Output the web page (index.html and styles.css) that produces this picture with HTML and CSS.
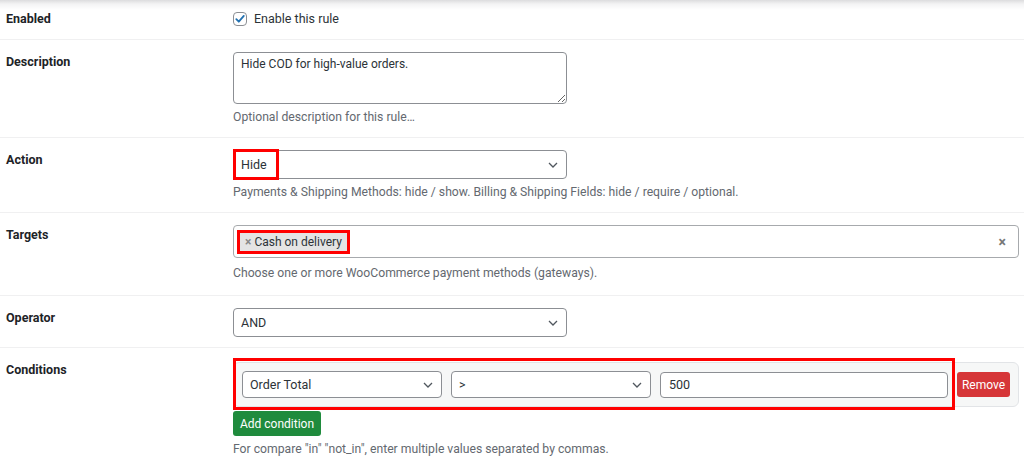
FILE: index.html
```html
<!DOCTYPE html>
<html lang="en">
<head>
<meta charset="utf-8">
<title>Rule</title>
<link rel="stylesheet" href="styles.css">
</head>
<body>
<div class="page">
  <div class="row row-first">
    <div class="label">Enabled</div>
    <div class="field">
      <label class="check">
        <span class="box"><svg width="12" height="12" viewBox="0 0 12 12"><path d="M2.3 6.2 L4.8 8.7 L9.8 2.9" fill="none" stroke="#2271b1" stroke-width="1.8" stroke-linecap="round" stroke-linejoin="round"/></svg></span>
        Enable this rule
      </label>
    </div>
  </div>

  <div class="row">
    <div class="label">Description</div>
    <div class="field">
      <textarea class="textarea" rows="3">Hide COD for high-value orders.</textarea>
      <p class="hint hint-tight">Optional description for this rule…</p>
    </div>
  </div>

  <div class="row">
    <div class="label">Action</div>
    <div class="field">
      <div class="wrap">
        <select class="select"><option>Hide</option></select>
        <span class="mark mark-hide"></span>
      </div>
      <p class="hint hint-tight">Payments &amp; Shipping Methods: hide / show. Billing &amp; Shipping Fields: hide / require / optional.</p>
    </div>
  </div>

  <div class="row row-targets">
    <div class="label">Targets</div>
    <div class="field field-wide">
      <div class="multi">
        <span class="tag"><span class="tag-x">×</span>Cash on delivery</span>
        <span class="clear">×</span>
      </div>
      <p class="hint hint-loose">Choose one or more WooCommerce payment methods (gateways).</p>
    </div>
  </div>

  <div class="row row-operator">
    <div class="label">Operator</div>
    <div class="field">
      <select class="select"><option>AND</option></select>
    </div>
  </div>

  <div class="row row-last">
    <div class="label">Conditions</div>
    <div class="field field-wide">
      <div class="cond">
        <select class="select select-sm"><option>Order Total</option></select>
        <select class="select select-sm"><option>&gt;</option></select>
        <input class="input" type="text" value="500">
        <button class="btn btn-remove" type="button">Remove</button>
        <span class="mark mark-cond"></span>
      </div>
      <button class="btn btn-add" type="button">Add condition</button>
      <p class="hint hint-tight">For compare "in" "not_in", enter multiple values separated by commas.</p>
    </div>
  </div>
</div>
</body>
</html>
```

FILE: styles.css
```css
* { box-sizing: border-box; }

html, body {
  margin: 0;
  padding: 0;
  background: #fff;
}

body {
  font-family: Roboto, "Liberation Sans", Arial, sans-serif;
  font-size: 12px;
  color: #2c3338;
}

.page {
  width: 1024px;
  height: 466px;
  overflow: hidden;
  background: linear-gradient(#dcdcde 0, #f3f3f4 4px, #fff 10px) no-repeat;
}

.row {
  display: grid;
  grid-template-columns: 233px 1fr;
  border-bottom: 1px solid #f0f0f1;
}

.label {
  padding: 13px 0 0 6px;
  font-size: 12.5px;
  font-weight: 700;
  line-height: 18px;
  color: #1d2327;
}

.field {
  padding: 12px 5px 11px 0;
}

.row-first { height: 40px; }
.row-first .label { padding-top: 10px; }
.row-first .field { padding-top: 11px; }

.row-targets .field { padding-bottom: 13px; }
.row-operator .field { padding-bottom: 10px; }
.row-last { border-bottom: 0; }
.row-last .field { padding-top: 14px; }

.check {
  display: flex;
  align-items: center;
  gap: 7px;
  line-height: 16px;
  font-size: 12.5px;
  color: #2c3338;
}

.box {
  width: 14px;
  height: 14px;
  border: 1px solid #8c8f94;
  border-radius: 4px;
  display: flex;
  align-items: center;
  justify-content: center;
  background: #fff;
}

.textarea {
  display: block;
  width: 334px;
  height: 52px;
  margin: 0;
  padding: 3px 7px;
  border: 1px solid #8c8f94;
  border-radius: 4px;
  font: inherit;
  line-height: 17px;
  color: #2c3338;
  resize: vertical;
}

.hint {
  margin: 0;
  font-size: 12.2px;
  line-height: 17px;
  color: #646970;
}
.hint-tight { margin-top: 5px; }
.hint-loose { margin-top: 7px; }

.wrap {
  position: relative;
  width: 334px;
}

.select {
  display: block;
  width: 334px;
  height: 29px;
  margin: 0;
  padding: 0 24px 0 7px;
  border: 1px solid #8c8f94;
  border-radius: 4px;
  background: #fff url("data:image/svg+xml,%3Csvg xmlns='http://www.w3.org/2000/svg' width='10' height='6' viewBox='0 0 10 6'%3E%3Cpath d='M1 1l4 4 4-4' fill='none' stroke='%2350575e' stroke-width='1.3'/%3E%3C/svg%3E") no-repeat right 8px center;
  -webkit-appearance: none;
  appearance: none;
  font: inherit;
  font-size: 12.5px;
  color: #2c3338;
}

.mark {
  position: absolute;
  border: 3px solid #f00;
  pointer-events: none;
}

.mark-hide {
  left: 0;
  top: -1px;
  width: 46px;
  height: 31px;
}

.multi {
  display: flex;
  align-items: center;
  height: 33px;
  padding: 0 12px 0 6px;
  border: 1px solid #a7aaad;
  border-radius: 4px;
  background: #fff;
}

.tag {
  display: flex;
  align-items: center;
  height: 18px;
  padding: 0 5px 0 5px;
  background: #e4e4e4;
  border-radius: 0;
  outline: 3px solid #f00;
  color: #2c3338;
  font-size: 12px;
  line-height: 18px;
}

.tag-x {
  color: #888;
  font-weight: 700;
  margin-right: 3px;
}

.clear {
  margin-left: auto;
  color: #777;
  font-weight: 700;
  font-size: 14px;
}

.cond {
  position: relative;
  display: flex;
  align-items: center;
  gap: 9px;
  padding: 8px 8px;
  background: #f6f7f7;
  border: 1px solid #e2e4e7;
  border-radius: 6px;
}

.select-sm {
  width: 200px;
  height: 27px;
}

.input {
  flex: 1;
  height: 26px;
  margin: 0;
  padding: 0 8px;
  border: 1px solid #8c8f94;
  border-radius: 4px;
  font: inherit;
  font-size: 12.5px;
  color: #2c3338;
  background: #fff;
}

.mark-cond {
  left: -1px;
  top: -5px;
  width: 722px;
  height: 52px;
}

.btn {
  border: 0;
  border-radius: 3px;
  color: #fff;
  font: inherit;
  font-size: 12px;
  cursor: pointer;
}

.btn-remove {
  width: 53px;
  height: 25px;
  padding: 0;
  background: #d63638;
}

.btn-add {
  display: block;
  margin-top: 4px;
  width: 88px;
  height: 25px;
  padding: 0;
  background: #1f8b3d;
}
```
